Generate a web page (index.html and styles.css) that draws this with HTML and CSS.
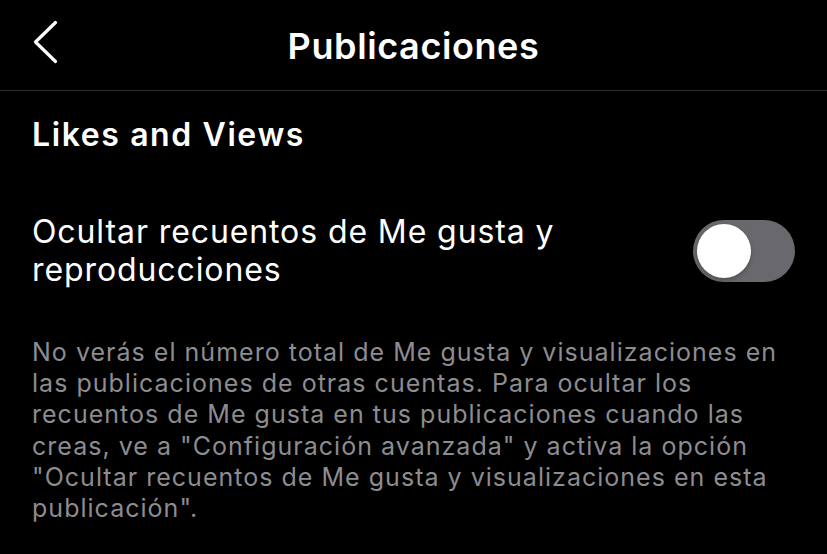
FILE: index.html
```html
<!DOCTYPE html>
<html lang="es">
<head>
<meta charset="utf-8">
<title>Publicaciones</title>
<link rel="stylesheet" href="styles.css">
</head>
<body>
<div class="screen">
  <header class="nav">
    <button class="back" aria-label="Atrás">
      <svg width="26" height="44" viewBox="0 0 26 44"><path d="M22.5 2.5 L2.5 22 L22.5 41.5" fill="none" stroke="#fff" stroke-width="3.2" stroke-linecap="round" stroke-linejoin="round"/></svg>
    </button>
    <h1 class="title">Publicaciones</h1>
    <span class="spacer"></span>
  </header>
  <main class="content">
    <h2 class="section-title">Likes and Views</h2>
    <div class="row">
      <div class="row-label">Ocultar recuentos de Me gusta y reproducciones</div>
      <div class="toggle"><span class="knob"></span></div>
    </div>
    <p class="desc">No verás el número total de Me gusta y visualizaciones en las publicaciones de otras cuentas. Para ocultar los recuentos de Me gusta en tus publicaciones cuando las creas, ve a "Configuración avanzada" y activa la opción "Ocultar recuentos de Me gusta y visualizaciones en esta publicación".</p>
  </main>
</div>
</body>
</html>
```

FILE: styles.css
```css
* { box-sizing: border-box; }
html, body {
  margin: 0;
  padding: 0;
  background: #000;
}
body {
  font-family: Inter, "Noto Sans", "Liberation Sans", sans-serif;
  color: #fff;
  width: 827px;
  height: 554px;
  overflow: hidden;
}
.nav {
  height: 91px;
  border-bottom: 1px solid #2e2e30;
  display: grid;
  grid-template-columns: 1fr auto 1fr;
  align-items: center;
}
.back {
  background: none;
  border: 0;
  padding: 0;
  margin: 0 0 0 33px;
  width: 26px;
  height: 44px;
  display: flex;
  align-self: start;
  margin-top: 20px;
}
.title {
  margin: 0;
  font-size: 36px;
  font-weight: 600;
  letter-spacing: 0.6px;
  line-height: 44px;
  padding-top: 1px;
}
.content {
  padding: 0 32px;
}
.section-title {
  margin: 0;
  padding-top: 24px;
  font-size: 32px;
  font-weight: 600;
  letter-spacing: 1.6px;
  line-height: 40px;
}
.row {
  display: flex;
  align-items: center;
  justify-content: space-between;
  margin-top: 58px;
}
.row-label {
  font-size: 32px;
  line-height: 38px;
  font-weight: 400;
  letter-spacing: 0.9px;
  flex: 0 1 640px;
}
.toggle {
  width: 102px;
  height: 62px;
  border-radius: 31px;
  background: #68686d;
  padding: 4px;
  display: flex;
  align-items: center;
}
.knob {
  width: 54px;
  height: 54px;
  border-radius: 50%;
  background: #fff;
  box-shadow: 0 2px 4px rgba(0,0,0,0.25);
}
.desc {
  margin: 48px 0 0 0;
  font-size: 25px;
  line-height: 31.2px;
  color: #8c8c91;
  letter-spacing: 1.02px;
}
```
